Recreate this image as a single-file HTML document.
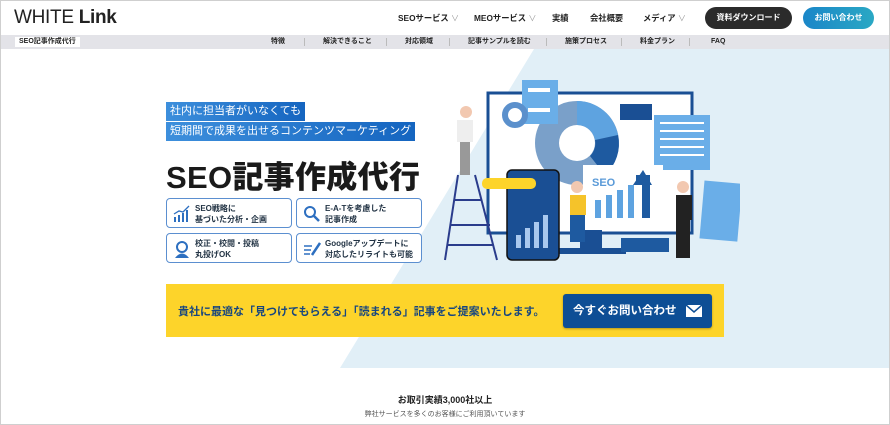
<!DOCTYPE html>
<html><head><meta charset="utf-8"><style>
*{margin:0;padding:0;box-sizing:border-box}
body{width:890px;height:425px;overflow:hidden;background:#fff;font-family:"Liberation Sans","Noto Sans CJK JP",sans-serif;position:relative;color:#222}
.frame{position:absolute;inset:0;border:1px solid #cfcfcf;pointer-events:none;z-index:9}
.hdr{position:absolute;left:0;top:0;width:890px;height:35px}
.logo{position:absolute;left:14px;top:7px;font-size:19px;letter-spacing:-0.3px;color:#222}
.logo b{font-weight:700}
.nav{position:absolute;top:12px;font-size:8.3px;font-weight:700;color:#222}
.nav i{font-style:normal;color:#999;font-weight:400;font-size:8px}
.btn1{position:absolute;left:705px;top:7px;width:87px;height:22px;border-radius:11px;background:#2b2b2b;color:#fff;font-size:8px;font-weight:700;text-align:center;line-height:22px}
.btn2{position:absolute;left:803px;top:7px;width:71px;height:22px;border-radius:11px;background:linear-gradient(90deg,#1a86c8,#2aa8c4);color:#fff;font-size:8px;font-weight:700;text-align:center;line-height:22px}
.sub{position:absolute;left:1px;top:35px;width:888px;height:14px;background:#e3e3e8}
.tag{position:absolute;left:14px;top:2px;height:10px;background:#fff;font-size:7px;font-weight:700;line-height:10px;padding:0 4px}
.sn{position:absolute;top:2px;font-size:7px;font-weight:700;line-height:10px}
.sep{position:absolute;top:3px;width:1px;height:8px;background:#bbb}
.pill{position:absolute;background:linear-gradient(90deg,#3d8fdc,#1565c0);color:#fff;font-size:11px;padding:0 4px;height:19px;line-height:19px}
.h1{position:absolute;left:166px;top:152px;font-size:31px;font-weight:900;letter-spacing:0.3px;color:#1a1a1a}
.box{position:absolute;width:126px;height:30px;border:1.5px solid #5b8fd0;border-radius:4px;background:#fff;font-size:8px;font-weight:700;color:#234;line-height:11px;padding:4px 0 0 28px}
.box svg{position:absolute;left:6px;top:6px}
.ybar{position:absolute;left:166px;top:284px;width:558px;height:53px;background:#fdd42a}
.ytxt{position:absolute;left:12px;top:19px;font-size:11px;font-weight:700;color:#17467f}
.cta{position:absolute;left:397px;top:10px;width:149px;height:34px;background:#0d4e95;border-radius:3px;color:#fff;font-size:11.5px;font-weight:700;line-height:34px;padding-left:10px;box-shadow:0 1px 2px rgba(0,0,0,.3)}
.t1{position:absolute;left:0;width:890px;top:393px;text-align:center;font-size:9px;font-weight:700}
.t2{position:absolute;left:0;width:890px;top:409px;text-align:center;font-size:7px;color:#555}
</style></head><body>
<div class="frame"></div>
<svg width="890" height="320" viewBox="0 49 890 320" style="position:absolute;left:0;top:49px"><polygon points="534,49 889,49 889,368 340,368" fill="#e1eff7"/></svg>
<div class="hdr">
<div class="logo">WHITE <b>Link</b></div>
<div class="nav" style="left:398px">SEOサービス <i>∨</i></div>
<div class="nav" style="left:474px">MEOサービス <i>∨</i></div>
<div class="nav" style="left:552px">実績</div>
<div class="nav" style="left:590px">会社概要</div>
<div class="nav" style="left:643px">メディア <i>∨</i></div>
<div class="btn1">資料ダウンロード</div>
<div class="btn2">お問い合わせ</div>
</div>
<div class="sub">
<div class="tag">SEO記事作成代行</div>
<div class="sn" style="left:270px">特徴</div><div class="sep" style="left:303px"></div>
<div class="sn" style="left:322px">解決できること</div><div class="sep" style="left:385px"></div>
<div class="sn" style="left:404px">対応領域</div><div class="sep" style="left:448px"></div>
<div class="sn" style="left:467px">記事サンプルを読む</div><div class="sep" style="left:545px"></div>
<div class="sn" style="left:564px">施策プロセス</div><div class="sep" style="left:620px"></div>
<div class="sn" style="left:639px">料金プラン</div><div class="sep" style="left:688px"></div>
<div class="sn" style="left:710px">FAQ</div>
</div>
<div class="pill" style="left:166px;top:102px">社内に担当者がいなくても</div>
<div class="pill" style="left:166px;top:122px">短期間で成果を出せるコンテンツマーケティング</div>
<div class="h1">SEO記事作成代行</div>
<div class="box" style="left:166px;top:198px"><svg width="18" height="18"><g fill="#2d6fc0"><rect x="1" y="12" width="2" height="5"/><rect x="5" y="10" width="2" height="7"/><rect x="9" y="8" width="2" height="9"/><rect x="13" y="5" width="2" height="12"/></g><polyline points="1,9 6,6 10,7 16,1" stroke="#2d6fc0" fill="none" stroke-width="1.3"/></svg>SEO戦略に<br>基づいた分析・企画</div>
<div class="box" style="left:296px;top:198px"><svg width="18" height="18"><circle cx="7" cy="7" r="5" stroke="#2d6fc0" stroke-width="2" fill="none"/><line x1="11" y1="11" x2="16" y2="16" stroke="#2d6fc0" stroke-width="2.5"/></svg>E-A-Tを考慮した<br>記事作成</div>
<div class="box" style="left:166px;top:233px"><svg width="18" height="18"><circle cx="9" cy="7" r="5" fill="none" stroke="#2d6fc0" stroke-width="2"/><path d="M2 18 Q9 9 16 18Z" fill="#2d6fc0"/></svg>校正・校閲・投稿<br>丸投げOK</div>
<div class="box" style="left:296px;top:233px"><svg width="18" height="18"><g stroke="#2d6fc0" stroke-width="1.5"><line x1="1" y1="6" x2="9" y2="6"/><line x1="1" y1="10" x2="8" y2="10"/><line x1="1" y1="14" x2="7" y2="14"/><line x1="9" y1="15" x2="17" y2="3" stroke-width="2.5"/></g></svg>Googleアップデートに<br>対応したリライトも可能</div>
<svg width="300" height="220" style="position:absolute;left:440px;top:60px">
<rect x="48" y="33" width="204" height="140" fill="#fff" stroke="#1a4f94" stroke-width="3"/>
<rect x="140" y="170" width="22" height="20" fill="#1a4f94"/><rect x="118" y="188" width="68" height="6" fill="#1a4f94"/>
<circle cx="137" cy="83" r="42" fill="#7aa0c9"/><circle cx="137" cy="83" r="18" fill="#fff"/>
<path d="M137 41 A42 42 0 0 1 178 75 L155 80 A18 18 0 0 0 137 65Z" fill="#5ea3e0"/>
<path d="M178 75 A42 42 0 0 1 165 115 L150 96 A18 18 0 0 0 155 80Z" fill="#1e5aa0"/>
<rect x="82" y="20" width="36" height="44" fill="#6aaee8"/><rect x="88" y="28" width="22" height="4" fill="#fff"/><rect x="88" y="48" width="22" height="4" fill="#fff"/>
<circle cx="75" cy="55" r="10" fill="none" stroke="#5b90cc" stroke-width="6"/>
<rect x="180" y="44" width="32" height="16" fill="#1a4f94"/>
<rect x="214" y="55" width="56" height="55" fill="#6aaee8"/>
<g fill="#fff"><rect x="220" y="62" width="44" height="2"/><rect x="220" y="70" width="44" height="2"/><rect x="220" y="78" width="44" height="2"/><rect x="220" y="86" width="44" height="2"/><rect x="220" y="94" width="44" height="2"/></g>
<rect x="143" y="105" width="80" height="58" fill="#fff"/><text x="152" y="126" font-size="11" font-weight="700" fill="#5a9ad8" font-family="Liberation Sans">SEO</text>
<g fill="#5ea3e0"><rect x="155" y="140" width="6" height="18"/><rect x="166" y="135" width="6" height="23"/><rect x="177" y="130" width="6" height="28"/><rect x="188" y="125" width="6" height="33"/></g>
<polygon points="196,115 210,115 210,158 202,158 202,125 196,125" fill="#1e5aa0"/><polygon points="193,125 212,125 203,110" fill="#1e5aa0"/>
<rect x="67" y="110" width="52" height="90" rx="5" fill="#1a4f94" stroke="#111" stroke-width="1.5"/>
<g fill="#a9c8ee"><rect x="76" y="175" width="5" height="13"/><rect x="85" y="168" width="5" height="20"/><rect x="94" y="162" width="5" height="26"/><rect x="103" y="155" width="5" height="33"/></g>
<rect x="42" y="118" width="54" height="11" rx="5" fill="#fdd42a"/>
<rect x="262" y="122" width="38" height="58" fill="#6aaee8" transform="rotate(5 280 150)"/>
<rect x="181" y="178" width="48" height="14" fill="#1e5aa0"/>
<path d="M20 80 h10 v35 h-10z" fill="#999"/><rect x="17" y="60" width="16" height="22" fill="#eee"/><circle cx="26" cy="52" r="6" fill="#f2c8b0"/>
<g stroke="#2a3c8c" stroke-width="2"><line x1="18" y1="115" x2="5" y2="200"/><line x1="35" y1="115" x2="57" y2="200"/><line x1="14" y1="140" x2="42" y2="140"/><line x1="10" y1="165" x2="50" y2="165"/><line x1="7" y1="185" x2="54" y2="185"/></g>
<rect x="130" y="135" width="16" height="20" fill="#f5c32a"/><rect x="130" y="155" width="15" height="27" fill="#1e5aa0"/><circle cx="137" cy="127" r="6" fill="#f2c8b0"/>
<rect x="236" y="135" width="16" height="25" fill="#222"/><rect x="236" y="160" width="14" height="38" fill="#222"/><circle cx="243" cy="127" r="6" fill="#f2c8b0"/>
</svg>
<div class="ybar"><div class="ytxt">貴社に最適な「見つけてもらえる」「読まれる」記事をご提案いたします。</div>
<div class="cta">今すぐお問い合わせ<svg width="16" height="12" style="position:absolute;right:10px;top:11px"><rect width="16" height="12" fill="#fff"/><polyline points="0,0 8,7 16,0" stroke="#0d4e95" fill="none" stroke-width="1.5"/></svg></div></div>
<div class="t1">お取引実績3,000社以上</div>
<div class="t2">弊社サービスを多くのお客様にご利用頂いています</div>
</body></html>
